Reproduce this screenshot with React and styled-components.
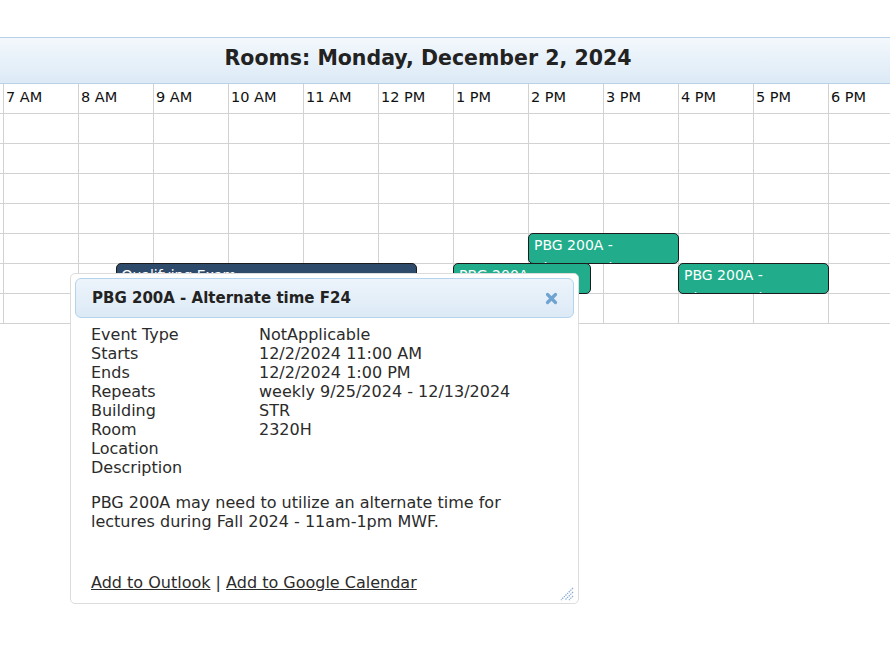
import React from 'react'
import styled, { createGlobalStyle } from 'styled-components'

const HOUR_W = 75
const FIRST_HOUR = 7
const ROW_H = 30
const hours = ['7 AM', '8 AM', '9 AM', '10 AM', '11 AM', '12 PM', '1 PM', '2 PM', '3 PM', '4 PM', '5 PM', '6 PM']
const rowCount = 7

// events placed by start/end hour and room row
const events = [
  { title: 'PBG 200A - Alternate time F24', start: 14, end: 16, row: 4, kind: 'green' },
  { title: 'PBG 200A - Alternate time F24', start: 13, end: 14.833, row: 5, kind: 'green' },
  { title: 'PBG 200A - Alternate time F24', start: 16, end: 18, row: 5, kind: 'green' },
  { title: 'Qualifying Exam', start: 8.5, end: 12.5, row: 5, kind: 'navy' },
]

const details = [
  ['Event Type', 'NotApplicable'],
  ['Starts', '12/2/2024 11:00 AM'],
  ['Ends', '12/2/2024 1:00 PM'],
  ['Repeats', 'weekly 9/25/2024 - 12/13/2024'],
  ['Building', 'STR'],
  ['Room', '2320H'],
  ['Location', ''],
  ['Description', ''],
]

const GlobalStyle = createGlobalStyle`
  html, body {
    margin: 0;
    background: #fff;
  }
  body {
    font-family: "DejaVu Sans", "Liberation Sans", sans-serif;
    color: #222;
  }
  * { box-sizing: border-box; }
`

export default function App() {
  return (
    <>
      <GlobalStyle />
      <Page>
        <Scheduler>
          <Title>Rooms: Monday, December 2, 2024</Title>
          <Row>
            <Cell />
            {hours.map(h => (
              <Cell key={h}>{h}</Cell>
            ))}
          </Row>
          <Body>
            {Array.from({ length: rowCount }).map((_, r) => (
              <Row key={r}>
                <Cell />
                {hours.map(h => (
                  <Cell key={h} />
                ))}
              </Row>
            ))}
            {events.map((e, i) => (
              <Event
                key={i}
                $kind={e.kind}
                style={{
                  left: 3 + (e.start - FIRST_HOUR) * HOUR_W,
                  top: e.row * ROW_H - 1,
                  width: (e.end - e.start) * HOUR_W + 1,
                }}
              >
                {e.title}
              </Event>
            ))}
          </Body>
        </Scheduler>

        <Dialog>
          <DialogBar>
            <DialogTitle>PBG 200A - Alternate time F24</DialogTitle>
            <Close aria-label="close">
              <svg width="13" height="13" viewBox="0 0 13 13">
                <path d="M2.5 2.5 L10.5 10.5 M10.5 2.5 L2.5 10.5" stroke="#6fa3d2" strokeWidth="3.2" strokeLinecap="round" />
              </svg>
            </Close>
          </DialogBar>
          <DialogBody>
            <Details>
              {details.map(([k, v]) => (
                <React.Fragment key={k}>
                  <span>{k}</span>
                  <span>{v}</span>
                </React.Fragment>
              ))}
            </Details>
            <Description>
              PBG 200A may need to utilize an alternate time for lectures during Fall 2024 - 11am-1pm MWF.
            </Description>
            <Links>
              <a href="#">Add to Outlook</a> | <a href="#">Add to Google Calendar</a>
            </Links>
          </DialogBody>
          <Grip width="14" height="14" viewBox="0 0 14 14">
            <path d="M13 1 L1 13 M13 5 L5 13 M13 9 L9 13" stroke="#86acd4" strokeWidth="1.3" strokeDasharray="1.4 0.9" />
          </Grip>
        </Dialog>
      </Page>
    </>
  )
}

const Page = styled.div`
  position: relative;
  width: 890px;
  height: 652px;
  padding-top: 37px;
  overflow: hidden;
`
const Scheduler = styled.div`
  width: 100%;
`
const Title = styled.div`
  height: 47px;
  display: flex;
  align-items: center;
  justify-content: center;
  padding: 0 34px 5px 0;
  border-top: 1px solid #b8d1e6;
  border-bottom: 1px solid #b8d1e6;
  background: linear-gradient(#f3f8fc, #dceaf6);
  font-weight: bold;
  font-size: 20.5px;
  color: #222;
`
const Row = styled.div`
  display: grid;
  grid-template-columns: 4px repeat(11, ${HOUR_W}px) 1fr;
  height: ${ROW_H}px;
  border-bottom: 1px solid #d2d2d2;
  font-size: 14.5px;
  color: #111;
`
const Cell = styled.div`
  border-right: 1px solid #d2d2d2;
  display: flex;
  align-items: center;
  padding: 0 0 3px 2px;
  white-space: nowrap;
  overflow: hidden;
  &:last-child {
    border-right: none;
  }
`
const Body = styled.div`
  position: relative;
`
const Event = styled.div`
  position: absolute;
  height: 31px;
  padding: 0 5px;
  border: 1px solid #1b1b1b;
  border-radius: 5px;
  background: ${p => (p.$kind === 'navy' ? '#2f4b6b' : '#21ad8b')};
  color: #fff;
  font-size: 14px;
  line-height: 23px;
  overflow: hidden;
`
const Dialog = styled.div`
  position: absolute;
  left: 70px;
  top: 273px;
  width: 509px;
  height: 331px;
  padding: 4px;
  background: #fff;
  border: 1px solid #dcdcdc;
  border-radius: 5px;
`
const DialogBar = styled.div`
  height: 40px;
  display: flex;
  align-items: center;
  justify-content: space-between;
  padding: 0 15px 0 16px;
  border: 1px solid #b4d3ec;
  border-radius: 6px;
  background: linear-gradient(#edf4fb, #dceaf6);
`
const DialogTitle = styled.span`
  font-weight: bold;
  font-size: 15px;
  color: #222;
`
const Close = styled.span`
  display: flex;
`
const DialogBody = styled.div`
  padding: 7px 0 0 16px;
  font-size: 16px;
  line-height: 19px;
  color: #2b2b2b;
`
const Details = styled.div`
  display: grid;
  grid-template-columns: 168px 1fr;
`
const Description = styled.p`
  margin: 16px 0 0;
  width: 440px;
`
const Links = styled.div`
  margin-top: 42px;
  a {
    color: #2b2b2b;
    text-decoration: underline;
  }
`
const Grip = styled.svg`
  position: absolute;
  right: 4px;
  bottom: 2px;
`
